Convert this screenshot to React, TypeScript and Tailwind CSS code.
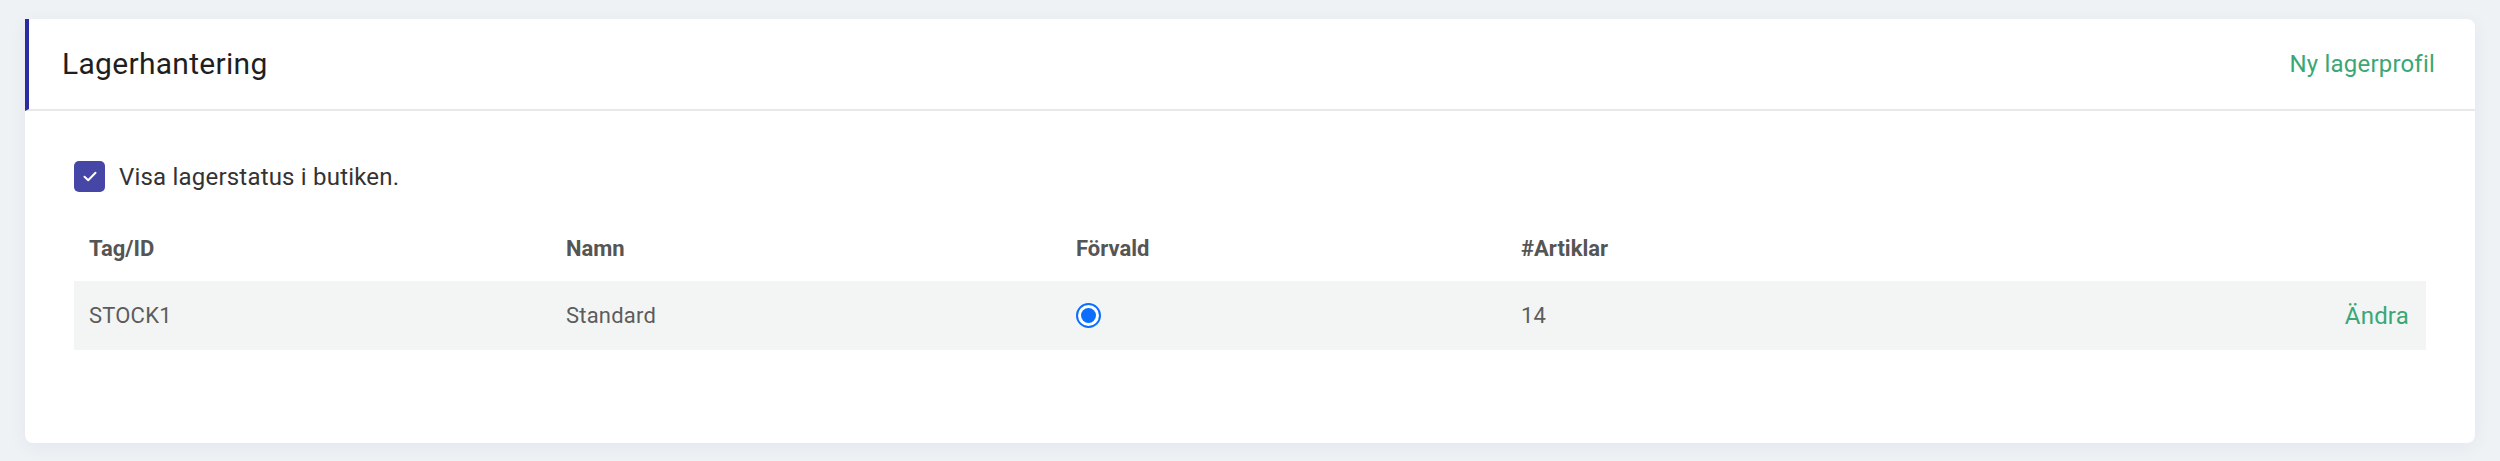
import React from "react";

export default function App() {
  return (
    <div className="min-h-[461px] w-full bg-[#eff2f5] px-[25px] pt-[19px] pb-[18px] font-['Roboto',sans-serif]">
      <div className="rounded-[8px] bg-white shadow-[0_4px_18px_rgba(30,40,60,0.06)]">
        <div className="flex h-[92px] items-center justify-between border-b-2 border-l-4 border-b-[#e8e8e8] border-l-[#2a2aa2] pl-[33px] pr-[40px]">
          <h1 className="text-[30px] font-normal leading-none tracking-[0.3px] text-[#1f1f1f]">Lagerhantering</h1>
          <a className="text-[24px] leading-none tracking-[0.2px] text-[#3ba776]">Ny lagerprofil</a>
        </div>
        <div className="px-[49px] pt-[50px] pb-[93px]">
          <label className="flex items-center gap-[14px]">
            <span className="flex h-[31px] w-[31px] items-center justify-center rounded-[5px] bg-[#4646a6]">
              <svg width="14" height="11" viewBox="0 0 14 11" fill="none">
                <path d="M1.5 5.8 L5.2 9.2 L12.5 1.8" stroke="white" strokeWidth="2" strokeLinecap="round" strokeLinejoin="round" />
              </svg>
            </span>
            <span className="text-[24px] leading-none tracking-[0.2px] text-[#333]">Visa lagerstatus i butiken.</span>
          </label>
          <div className="mt-[23px]">
            <div className="grid h-[66px] grid-cols-[477px_510px_445px_1fr] items-center text-[22px] font-bold text-[#555]">
              <div className="pl-[15px]">Tag/ID</div>
              <div className="pl-[15px]">Namn</div>
              <div className="pl-[15px]">Förvald</div>
              <div className="pl-[15px]">#Artiklar</div>
            </div>
            <div className="grid h-[69px] grid-cols-[477px_510px_445px_1fr_auto] items-center bg-[#f3f5f4] text-[22px] tracking-[0.2px] text-[#5c5c5c]">
              <div className="pl-[15px]">STOCK1</div>
              <div className="pl-[15px]">Standard</div>
              <div className="pl-[15px]">
                <span className="flex h-[25px] w-[25px] items-center justify-center rounded-full border-2 border-[#0b6efd] bg-white">
                  <span className="h-[15px] w-[15px] rounded-full bg-[#0b6efd]" />
                </span>
              </div>
              <div className="pl-[15px]">14</div>
              <div className="pr-[17px] text-right text-[24px] tracking-[0.2px] text-[#3ba776]">Ändra</div>
            </div>
          </div>
        </div>
      </div>
    </div>
  );
}
